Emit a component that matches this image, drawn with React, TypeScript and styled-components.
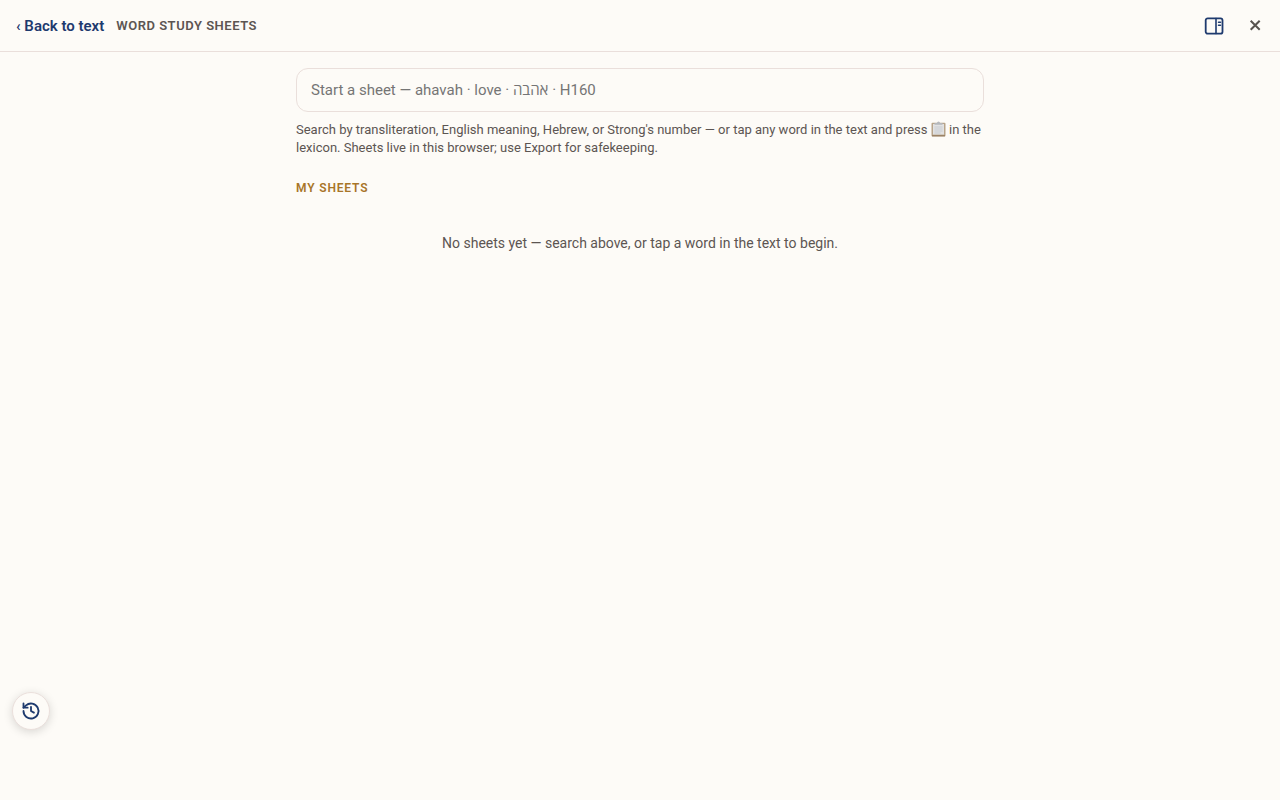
import React from "react";
import styled, { createGlobalStyle } from "styled-components";

const GlobalStyle = createGlobalStyle`
  *, *::before, *::after { box-sizing: border-box; }
  body {
    margin: 0;
    background: #fdfbf7;
    color: #5c5552;
    font-family: Roboto, "Noto Sans", "Open Sans", sans-serif;
  }
  button, input { font: inherit; color: inherit; }
`;

const Header = styled.header`
  display: flex;
  align-items: center;
  gap: 12px;
  height: 52px;
  padding: 0 12px 0 16px;
  border-bottom: 1px solid #eadfdb;
`;

const BackLink = styled.a`
  color: #1e3a6e;
  font-size: 15px;
  font-weight: 600;
  text-decoration: none;
`;

const Title = styled.h1`
  margin: 0;
  flex: 1;
  font-size: 13px;
  font-weight: 600;
  letter-spacing: 0.04em;
  text-transform: uppercase;
`;

const Actions = styled.div`
  display: flex;
  gap: 10px;
`;

const IconButton = styled.button<{ $wide?: boolean }>`
  display: grid;
  place-items: center;
  width: ${(p) => (p.$wide ? 36 : 26)}px;
  height: 36px;
  padding: 0;
  border: 0;
  background: none;
  color: ${(p) => (p.$wide ? "#1e3a6e" : "#57534e")};
  cursor: pointer;
`;

const Main = styled.main`
  max-width: 720px;
  margin: 0 auto;
  padding: 16px;
`;

const SearchInput = styled.input`
  display: block;
  width: 100%;
  height: 44px;
  padding: 0 14px;
  border: 1px solid #eadfdb;
  border-radius: 12px;
  background: #fdfbf7;
  font-size: 15px;
  outline: none;
  &::placeholder { color: #757575; opacity: 1; }
`;

const Hint = styled.p`
  margin: 9px 0 0;
  font-size: 13px;
  line-height: 18px;
`;

const ClipboardMark = styled.svg`
  width: 15px;
  height: 16px;
  vertical-align: -3px;
`;

const SectionTitle = styled.h2`
  margin: 24px 0 0;
  color: #a87528;
  font-size: 12px;
  line-height: 14px;
  font-weight: 600;
  letter-spacing: 0.07em;
  text-transform: uppercase;
`;

const Empty = styled.p`
  margin: 0;
  padding: 40px 16px;
  font-size: 14px;
  line-height: 16px;
  text-align: center;
`;

const HistoryButton = styled.button`
  position: fixed;
  left: 12px;
  bottom: 70px;
  display: grid;
  place-items: center;
  width: 38px;
  height: 38px;
  padding: 0;
  border: 1px solid #eadfdb;
  border-radius: 50%;
  background: #fdfbf7;
  color: #1e3a6e;
  box-shadow: 0 2px 10px rgba(0, 0, 0, 0.15);
  cursor: pointer;
`;

const PanelIcon = () => (
  <svg width="20" height="20" viewBox="0 0 20 20" fill="none" stroke="currentColor" strokeLinecap="round" aria-hidden="true">
    <rect x="1.7" y="2.3" width="16.8" height="15.4" rx="2" strokeWidth="1.8" />
    <path d="M12 2.5v15" strokeWidth="1.6" />
    <path d="M14.5 6.3h2M14.5 9.3h2" strokeWidth="1.5" />
  </svg>
);

const CloseIcon = () => (
  <svg width="12" height="14" viewBox="0 0 12 14" fill="none" stroke="currentColor" strokeWidth="2" aria-hidden="true">
    <path d="M1.7 1.7l9 9M10.7 1.7l-9 9" />
  </svg>
);

const HistoryIcon = () => (
  <svg width="20" height="20" viewBox="0 0 24 24" fill="none" stroke="currentColor" strokeWidth="2.2" strokeLinecap="round" strokeLinejoin="round" aria-hidden="true">
    <path d="M3 12a9 9 0 1 0 3-6.7L3 8" />
    <path d="M3 3v5h5" />
    <path d="M12 7v5l3.5 2" />
  </svg>
);

const Clipboard = () => (
  <ClipboardMark viewBox="0 0 15 16" role="img" aria-label="clipboard">
    <rect x="0.5" y="1.8" width="14" height="13.7" rx="1" fill="#b8a48a" />
    <rect x="2" y="3" width="11" height="10.6" fill="#e2e2e2" />
    <path d="M3.5 6h8M3.5 8h8M3.5 10h8M3.5 12h6" stroke="#c5cad0" strokeWidth="0.9" />
    <path d="M3.5 3.8V2H6a1.5 1.5 0 0 1 3 0h2.5v1.8z" fill="#b5b8bc" />
    <path d="M1 14.8h13" stroke="#8f7558" strokeWidth="1" />
  </ClipboardMark>
);

export default function App() {
  return (
    <>
      <GlobalStyle />
      <Header>
        <BackLink href="#text">‹ Back to text</BackLink>
        <Title>Word Study Sheets</Title>
        <Actions>
          <IconButton type="button" $wide aria-label="Dock to side"><PanelIcon /></IconButton>
          <IconButton type="button" aria-label="Close"><CloseIcon /></IconButton>
        </Actions>
      </Header>
      <Main>
        <SearchInput type="text" aria-label="Start a sheet" placeholder="Start a sheet — ahavah · love · אהבה · H160" />
        <Hint>
          Search by transliteration, English meaning, Hebrew, or Strong's number — or tap any word in the text and press <Clipboard /> in the lexicon. Sheets live in this browser; use Export for safekeeping.
        </Hint>
        <SectionTitle>My Sheets</SectionTitle>
        <Empty>No sheets yet — search above, or tap a word in the text to begin.</Empty>
      </Main>
      <HistoryButton type="button" aria-label="History"><HistoryIcon /></HistoryButton>
    </>
  );
}
